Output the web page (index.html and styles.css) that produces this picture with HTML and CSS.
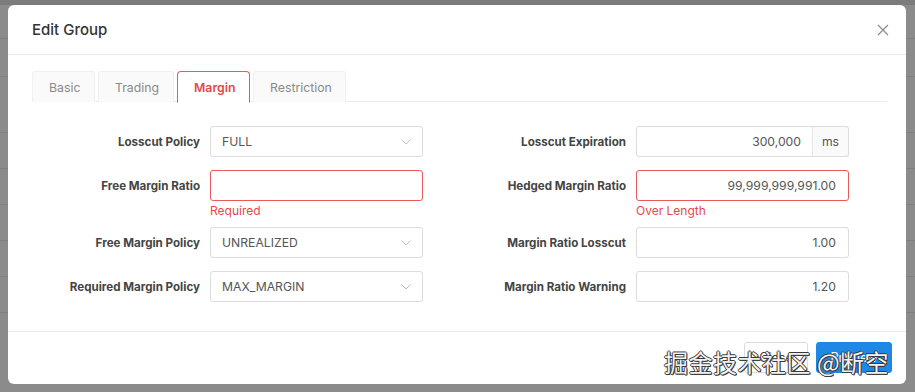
FILE: index.html
```html
<!DOCTYPE html>
<html>
<head>
<meta charset="utf-8">
<link rel="stylesheet" href="styles.css">
</head>
<body>
<div class="backdrop">
  <div class="bg-top"></div>
  <div class="bg-row r1"></div>
  <div class="bg-row r2"></div>
  <div class="bg-row r3"></div>
  <div class="bg-row"></div>
  <div class="bg-row"></div>
  <div class="bg-row"></div>
  <div class="bg-row"></div>
  <div class="bg-row"></div>
</div>

<div class="modal">
  <div class="modal-header">
    <span class="modal-title">Edit Group</span>
    <svg class="close-icon" width="12" height="12" viewBox="0 0 12 12"><path d="M1 1 L11 11 M11 1 L1 11" stroke="#8c8c8c" stroke-width="1.2" fill="none"/></svg>
  </div>
  <div class="modal-body">
    <div class="tabs">
      <div class="tab">Basic</div>
      <div class="tab">Trading</div>
      <div class="tab active">Margin</div>
      <div class="tab">Restriction</div>
    </div>
    <div class="form">
      <div class="col">
        <div class="item">
          <label class="label">Losscut Policy</label>
          <div class="control"><div class="select">FULL<svg class="arrow" width="10" height="6" viewBox="0 0 10 6"><path d="M0.5 0.5 L5 5 L9.5 0.5" stroke="#c0c0c0" fill="none"/></svg></div></div>
        </div>
        <div class="item has-error">
          <label class="label">Free Margin Ratio</label>
          <div class="control"><div class="input error"></div><div class="err-msg">Required</div></div>
        </div>
        <div class="item">
          <label class="label">Free Margin Policy</label>
          <div class="control"><div class="select">UNREALIZED<svg class="arrow" width="10" height="6" viewBox="0 0 10 6"><path d="M0.5 0.5 L5 5 L9.5 0.5" stroke="#c0c0c0" fill="none"/></svg></div></div>
        </div>
        <div class="item">
          <label class="label">Required Margin Policy</label>
          <div class="control"><div class="select">MAX_MARGIN<svg class="arrow" width="10" height="6" viewBox="0 0 10 6"><path d="M0.5 0.5 L5 5 L9.5 0.5" stroke="#c0c0c0" fill="none"/></svg></div></div>
        </div>
      </div>
      <div class="col">
        <div class="item">
          <label class="label">Losscut Expiration</label>
          <div class="control"><div class="group"><div class="input num grouped">300,000</div><div class="addon">ms</div></div></div>
        </div>
        <div class="item has-error">
          <label class="label">Hedged Margin Ratio</label>
          <div class="control"><div class="input num error">99,999,999,991.00</div><div class="err-msg">Over Length</div></div>
        </div>
        <div class="item">
          <label class="label">Margin Ratio Losscut</label>
          <div class="control"><div class="input num">1.00</div></div>
        </div>
        <div class="item">
          <label class="label">Margin Ratio Warning</label>
          <div class="control"><div class="input num">1.20</div></div>
        </div>
      </div>
    </div>
  </div>
  <div class="modal-footer">
    <button class="btn">Close</button>
    <button class="btn primary">Preview</button>
  </div>
</div>

<div class="watermark">掘金技术社区 @断空</div>
</body>
</html>
```

FILE: styles.css
```css
* { box-sizing: border-box; }
html, body { margin: 0; padding: 0; }
body {
  width: 915px;
  height: 392px;
  overflow: hidden;
  background: #8b8b8b;
  font-family: Inter, "Liberation Sans", "Noto Sans CJK SC", sans-serif;
  position: relative;
}
.backdrop {
  display: flex;
  flex-direction: column;
}
.bg-top { height: 5px; background: #7c7c7c; }
.bg-row { height: 36px; border-bottom: 1px solid #7f7f7f; }
.bg-row.r1 { height: 34px; }
.bg-row.r2 { height: 38px; }
.bg-row.r3 { height: 56px; }

.modal {
  position: absolute;
  left: 8px;
  top: 5px;
  width: 898px;
  height: 379px;
  background: #fff;
  border-radius: 6px;
  display: flex;
  flex-direction: column;
}
.modal-header {
  height: 50px;
  border-bottom: 1px solid #ececec;
  display: flex;
  align-items: center;
  justify-content: space-between;
  padding: 0 17px 0 24px;
}
.modal-title {
  font-size: 15px;
  font-weight: 500;
  color: #333;
}
.close-icon { display: block; }

.modal-body {
  flex: 1;
  padding: 16px 19px 0 24px;
}
.tabs {
  display: flex;
  gap: 3px;
  border-bottom: 1px solid #ececec;
  height: 31px;
}
.tab {
  height: 31px;
  padding: 0 16px;
  display: flex;
  align-items: center;
  font-size: 12.3px;
  color: #8a8a8a;
  background: #fafafa;
  border: 1px solid #f0f0f0;
  border-bottom: none;
  border-radius: 3px 3px 0 0;
}
.tab:nth-child(1) { width: 63px; }
.tab:nth-child(2) { width: 76px; }
.tab:nth-child(3) { width: 73px; }
.tab:nth-child(4) { width: 93px; }
.tab.active {
  background: #fff;
  color: #e8464a;
  font-weight: 600;
  border: 1px solid #e8585c;
  border-bottom: 1px solid #fff;
  height: 32px;
  border-radius: 4px 4px 0 0;
}

.form {
  display: grid;
  grid-template-columns: 426px 426px;
  padding-top: 24px;
}
.col { display: flex; flex-direction: column; }
.item {
  display: grid;
  grid-template-columns: 168px 213px;
  column-gap: 10px;
  align-items: start;
  padding-bottom: 13px;
}
.item.has-error { padding-bottom: 6px; }
.label {
  height: 31px;
  display: flex;
  align-items: center;
  justify-content: flex-end;
  font-size: 11.6px;
  font-weight: 700;
  color: #444;
}
.control { display: flex; flex-direction: column; }
.input, .select {
  height: 31px;
  border: 1px solid #dcdcdc;
  border-radius: 3px;
  font-size: 12.2px;
  color: #555;
  display: flex;
  align-items: center;
  padding: 0 12px 0 11px;
}
.select { justify-content: space-between; padding-right: 11px; }
.arrow { display: block; }
.input.num { justify-content: flex-end; }
.input.error { border-color: #e8585c; }
.err-msg {
  font-size: 12px;
  line-height: 20px;
  color: #e8464a;
}
.group { display: flex; }
.input.grouped {
  flex: 1;
  border-radius: 3px 0 0 3px;
  padding-right: 11px;
}
.addon {
  width: 37px;
  height: 31px;
  border: 1px solid #dcdcdc;
  border-left: 1px solid #e6e6e6;
  margin-left: -1px;
  border-radius: 0 3px 3px 0;
  background: #fafafa;
  color: #555;
  font-size: 12.2px;
  display: flex;
  align-items: center;
  justify-content: center;
}

.modal-footer {
  border-top: 1px solid #ececec;
  height: 53px;
  display: flex;
  justify-content: flex-end;
  align-items: flex-start;
  gap: 8px;
  padding: 10px 14px 0 0;
}
.btn {
  height: 31px;
  border-radius: 3px;
  border: 1px solid #dcdcdc;
  background: #fff;
  color: #444;
  font-family: inherit;
  font-size: 12.5px;
  padding: 0;
  width: 64px;
}
.btn.primary {
  width: 76px;
  background: #1f88e5;
  border-color: #1f88e5;
  color: #fff;
}

.watermark {
  position: absolute;
  left: 664px;
  top: 347px;
  font-family: "Noto Sans CJK SC", sans-serif;
  font-size: 24px;
  line-height: 30px;
  color: #f2f2f2;
  letter-spacing: 0.5px;
  text-shadow: 1px 0 0 #3a3a3a, -1px 0 0 #3a3a3a, 0 1px 0 #3a3a3a, 0 -1px 0 #3a3a3a, 1px 1px 0 #3a3a3a;
  white-space: nowrap;
}
```
